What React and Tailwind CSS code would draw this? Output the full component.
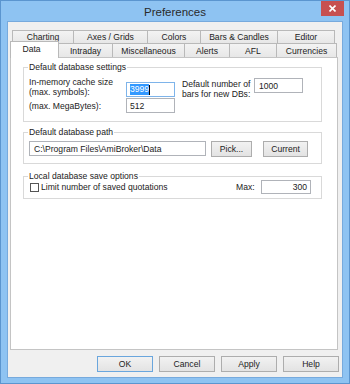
const backTabs = [
  { label: "Charting", w: "w-[61px]" },
  { label: "Axes / Grids", w: "w-[74px]" },
  { label: "Colors", w: "w-[53px]" },
  { label: "Bars & Candles", w: "w-[77px]" },
  { label: "Editor", w: "w-[58px] border-r" },
];

const frontTabs = [
  { label: "Intraday", w: "w-[54px]" },
  { label: "Miscellaneous", w: "w-[72px]" },
  { label: "Alerts", w: "w-[45px]" },
  { label: "AFL", w: "w-[47px]" },
  { label: "Currencies", w: "w-[60px]" },
];

function Btn({ children, cls = "" }) {
  return (
    <div
      className={`h-[16px] flex items-center justify-center border bg-gradient-to-b from-[#f2f2f2] to-[#e3e3e3] ${cls}`}
    >
      {children}
    </div>
  );
}

export default function App() {
  return (
    <div className="w-[350px] h-[384px] border border-[#5b95cf] bg-[#8ec3f2] flex flex-col font-[family-name:Liberation_Sans,Arial,sans-serif] text-[8.6px] leading-[10px] text-[#222]">
      {/* title bar */}
      <div className="h-[20px] flex items-start shrink-0">
        <div className="w-[28px]" />
        <div className="flex-1 text-center text-[11.5px] leading-[20px] pt-[1px] text-[#2a2a2a]">
          Preferences
        </div>
        <div className="w-[23px] h-[15px] bg-[#c75050] mr-[5px] flex items-center justify-center">
          <svg width="7" height="7" viewBox="0 0 7 7">
            <path d="M0.5 0.5 L6.5 6.5 M6.5 0.5 L0.5 6.5" stroke="#fff" strokeWidth="1.6" />
          </svg>
        </div>
      </div>

      {/* client */}
      <div className="mx-[6px] h-[357px] border border-[#77aadd] bg-[#f0f0f0] flex flex-col shrink-0">
        <div className="pt-[8px]">
          {/* back tab row */}
          <div className="flex ml-[4px] h-[13px]">
            {backTabs.map((t) => (
              <div
                key={t.label}
                className={`h-[13px] flex items-center justify-center border-t border-l border-[#b9b9b9] bg-gradient-to-b from-[#f3f3f3] to-[#e7e7e7] ${t.w}`}
              >
                {t.label}
              </div>
            ))}
          </div>
          {/* front tab row */}
          <div className="flex items-start ml-[2px] h-[14px]">
            <div className="relative z-10 -mt-[2px] w-[49px] h-[17px] flex items-center justify-center border-t border-l border-r border-[#b9b9b9] bg-white pb-[2px] pr-[6px]">
              Data
            </div>
            {frontTabs.map((t) => (
              <div
                key={t.label}
                className={`h-[14px] flex items-center justify-center border-t border-r border-[#b9b9b9] bg-gradient-to-b from-[#f3f3f3] to-[#e7e7e7] ${t.w}`}
              >
                {t.label}
              </div>
            ))}
          </div>
          {/* panel */}
          <div className="ml-[2px] w-[328px] h-[293px] border border-[#c4c4c4] bg-white flex flex-col">
            {/* group 1 */}
            <fieldset className="ml-[12px] w-[299px] mt-[3px] border border-[#d9d9d9]">
              <legend className="ml-[4px] px-[1px] leading-[12px]">Default database settings</legend>
              <div className="flex pl-[5px] pt-[4px] pb-[8px]">
                <div className="flex flex-col">
                  <div className="flex items-start">
                    <div className="w-[97px] leading-[10px]">
                      In-memory cache size
                      <br />
                      (max. symbols):
                    </div>
                    <div className="w-[49px] h-[15px] mt-[5px] border border-[#7eb4ea] bg-white flex items-center pl-[3px]">
                      <span className="bg-[#3399ff] text-white leading-[11px]">3999</span>
                      <span className="w-[1px] h-[10px] bg-black" />
                    </div>
                  </div>
                  <div className="flex items-center mt-[1px]">
                    <div className="w-[97px]">(max. MegaBytes):</div>
                    <div className="w-[49px] h-[15px] border border-[#b0b3b9] bg-white flex items-center pl-[3px]">
                      512
                    </div>
                  </div>
                </div>
                <div className="flex items-start ml-[7px] pt-[1px]">
                  <div className="w-[72px] leading-[10px] pt-[1px]">
                    Default number of
                    <br />
                    bars for new DBs:
                  </div>
                  <div className="w-[49px] h-[15px] border border-[#b0b3b9] bg-white flex items-center pl-[4px]">
                    1000
                  </div>
                </div>
              </div>
            </fieldset>

            {/* group 2 */}
            <fieldset className="ml-[12px] w-[299px] mt-[4px] border border-[#d9d9d9]">
              <legend className="ml-[4px] px-[1px] leading-[12px]">Default database path</legend>
              <div className="flex pl-[5px] pt-[3px] pb-[6px]">
                <div className="w-[177px] h-[15px] border border-[#b0b3b9] bg-white flex items-center pl-[4px]">
                  C:\Program Files\AmiBroker\Data
                </div>
                <Btn cls="ml-[5px] w-[41px] h-[15px] border-[#adadad]">Pick...</Btn>
                <Btn cls="ml-[11px] w-[45px] h-[15px] border-[#adadad]">Current</Btn>
              </div>
            </fieldset>

            {/* group 3 */}
            <fieldset className="ml-[12px] w-[299px] mt-[6px] border border-[#d9d9d9]">
              <legend className="ml-[4px] px-[1px] leading-[12px]">Local database save options</legend>
              <div className="flex items-center -mt-[2px] pl-[6px] pr-[10px] pb-[4px] h-[18px]">
                <div className="w-[9px] h-[9px] border border-[#555] bg-white" />
                <div className="ml-[2px] flex-1">Limit number of saved quotations</div>
                <div className="w-[25px]">Max:</div>
                <div className="w-[50px] h-[14px] border border-[#b0b3b9] bg-white flex items-center justify-end pr-[3px]">
                  300
                </div>
              </div>
            </fieldset>
          </div>

          {/* buttons */}
          <div className="flex mt-[6px] ml-[89px] gap-[6px]">
            <Btn cls="w-[56px] border-[#6aa6dd]">OK</Btn>
            <Btn cls="w-[56px] border-[#adadad]">Cancel</Btn>
            <Btn cls="w-[56px] border-[#adadad]">Apply</Btn>
            <Btn cls="w-[56px] border-[#adadad]">Help</Btn>
          </div>
        </div>
      </div>
    </div>
  );
}
